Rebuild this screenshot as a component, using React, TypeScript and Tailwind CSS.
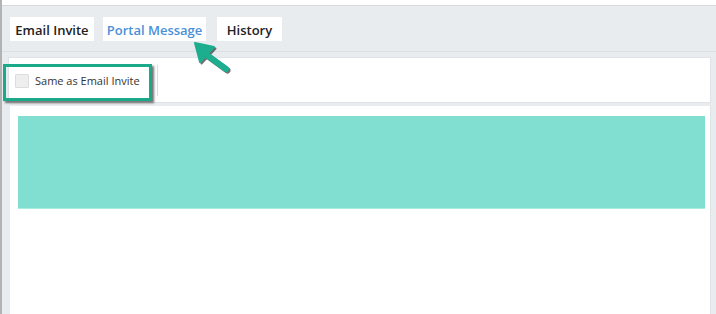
export default function App() {
  const tabs = [
    { label: 'Email Invite', active: false, width: 'w-[84px]' },
    { label: 'Portal Message', active: true, width: 'w-[103px]' },
    { label: 'History', active: false, width: 'w-[65px]' },
  ]

  return (
    <div className="relative w-[716px] h-[314px] overflow-hidden bg-[#e9ecef] font-['Open_Sans',sans-serif]">
      {/* left edge line */}
      <div className="absolute left-0 top-0 bottom-0 w-[2px] bg-[#b3b3b3]" />

      {/* top strip */}
      <div className="h-[6px] bg-white border-b border-[#d6d9dd]" />

      {/* Tabs */}
      <div className="flex pl-[10px] pt-[11px] pb-[10px] border-b border-[#dcdfe3]">
        {tabs.map((tab, i) => (
          <div
            key={tab.label}
            className={`${tab.width} ${i === 1 ? 'ml-[9px]' : ''} ${i === 2 ? 'ml-[11px]' : ''} h-[24px] bg-white flex items-center justify-center pt-[2px] text-[13px] font-semibold leading-none ${
              tab.active ? 'text-[#4a90d9]' : 'text-[#222]'
            }`}
          >
            {tab.label}
          </div>
        ))}
      </div>

      {/* Toolbar */}
      <div className="ml-[8px] mr-[5px] mt-[5px] h-[46px] bg-white border border-[#dfe2e6] flex items-center">
        <div className="flex items-center w-[148px] pl-[6px] pt-[2px]">
          <div className="w-[14px] h-[14px] bg-[#eeeeee] border border-[#dddddd] rounded-[1px]" />
          <span className="ml-[6px] text-[11px] text-[#333]">Same as Email Invite</span>
        </div>
        <div className="w-px h-[31px] bg-[#dddddd]" />
      </div>

      {/* Editor area */}
      <div className="ml-[10px] mr-[5px] mt-[3px] h-[210px] bg-white border-r border-[#dfe2e6] pt-[10px] pl-[8px] pr-[5px]">
        <div className="h-[93px] bg-[#80dfd0] border-b border-[#a9ece1]" />
      </div>

      {/* Highlight box */}
      <div className="absolute left-[3px] top-[64px] w-[149px] h-[37px] border-[3px] border-[#1aaa8a] shadow-[2px_2px_2px_rgba(0,0,0,0.55)]" />

      {/* Arrow */}
      <svg className="absolute left-[190px] top-[38px]" width="46" height="40" viewBox="0 0 46 40">
        <g transform="translate(1.5,1.5)" opacity="0.55">
          <path d="M36 31 L14 15" stroke="#000" strokeWidth="6" strokeLinecap="round" />
          <path d="M5 5 L24 9 L10 24 Z" fill="#000" stroke="#000" strokeWidth="2" strokeLinejoin="round" />
        </g>
        <path d="M36 31 L14 15" stroke="#1cae8e" strokeWidth="6" strokeLinecap="round" />
        <path d="M5 5 L24 9 L10 24 Z" fill="#1cae8e" stroke="#1cae8e" strokeWidth="2" strokeLinejoin="round" />
      </svg>
    </div>
  )
}
